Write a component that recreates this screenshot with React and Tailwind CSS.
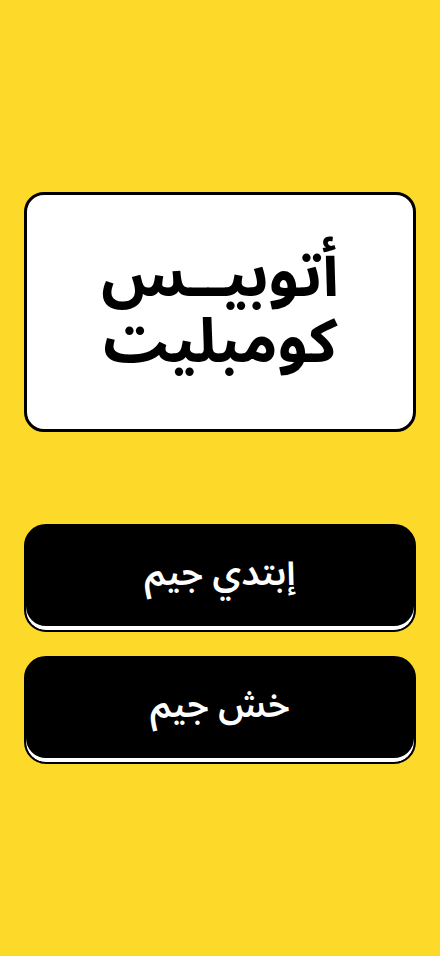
import React from 'react';

function GameButton({ label }) {
  return (
    <button
      type="button"
      className="w-full h-[108px] rounded-[22px] bg-black border-2 border-black shadow-[inset_0_-4px_0_#ffffff] flex items-center justify-center pb-2 text-white text-[36px] font-semibold"
    >
      {label}
    </button>
  );
}

export default function App() {
  return (
    <div
      dir="rtl"
      className="min-h-screen w-full bg-[#fdd92a] flex flex-col justify-center px-6"
      style={{ fontFamily: '"Noto Sans Arabic", "Noto Kufi Arabic", "Noto Sans", "DejaVu Sans", sans-serif' }}
    >
      <div className="h-[240px] rounded-[20px] bg-white border-[3px] border-black flex items-center justify-center">
        <h1 className="text-center text-[61px] font-bold leading-[66px] pb-1 text-black">
          أتوبيــس
          <br />
          كومبليت
        </h1>
      </div>

      <div className="mt-[92px] flex flex-col gap-6">
        <GameButton label="إبتدي جيم" />
        <GameButton label="خش جيم" />
      </div>
    </div>
  );
}
